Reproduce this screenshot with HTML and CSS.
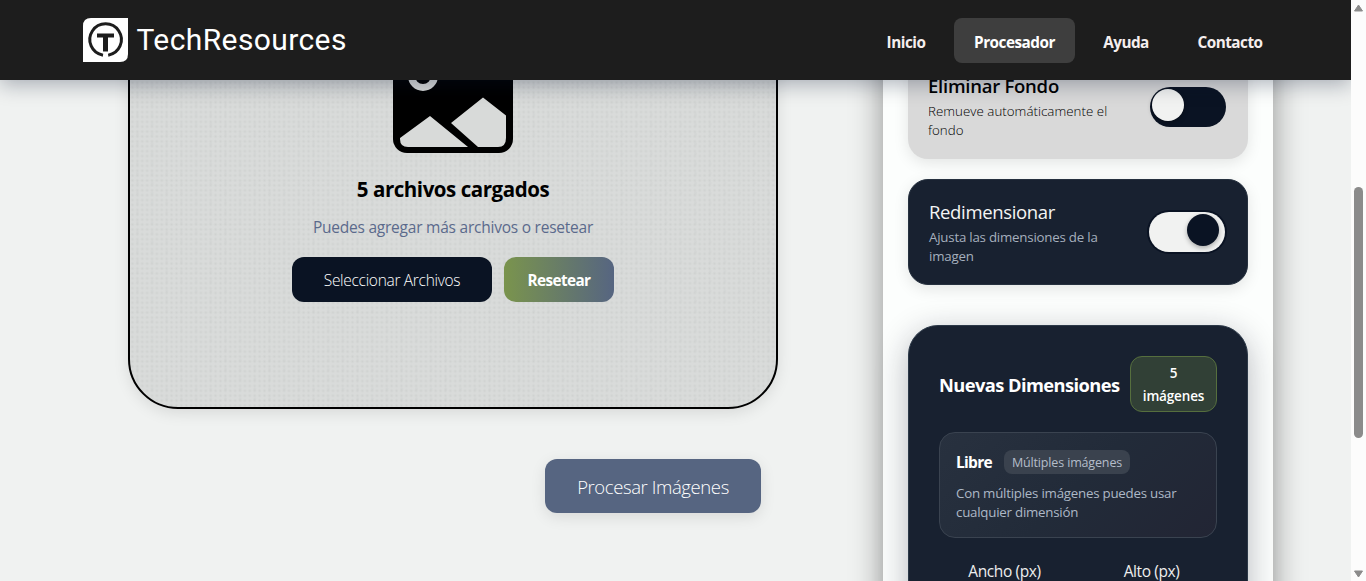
FILE: index.html
```html
<!DOCTYPE html>
<html lang="es">
<head>
<meta charset="utf-8">
<title>TechResources - Procesador</title>
<link rel="stylesheet" href="styles.css">
</head>
<body>
<div class="viewport">
  <div class="page">
    <header class="topbar">
      <a class="brand">
        <svg class="logo" width="46" height="44" viewBox="0 0 46 44">
          <path d="M8 0H45V36Q45 44 37 44H0V8Q0 0 8 0Z" fill="#fff"/>
          <path d="M20 37.200A15.800 15.800 0 1 1 25.200 37.200" fill="none" stroke="#1d1d1d" stroke-width="3"/>
          <path d="M14 15.500H31V19.500H25V33.500H20V19.500H14Z" fill="#1d1d1d"/>
        </svg>
        <span class="brand-name">TechResources</span>
      </a>
      <nav class="nav">
        <a class="nav-link nav-home">Inicio</a>
        <a class="nav-link nav-processor active">Procesador</a>
        <a class="nav-link nav-help">Ayuda</a>
        <a class="nav-link nav-contact">Contacto</a>
      </nav>
    </header>
    <main class="content">
      <section class="work">
        <div class="dropzone">
          <svg class="picture" width="120" height="120" viewBox="0 0 120 120">
            <rect width="120" height="120" rx="14" fill="#000"/>
            <circle cx="30" cy="43" r="11.500" fill="none" stroke="#d8dad9" stroke-width="7"/>
            <path d="M7 105L37 83L75 114H15Q7 114 7 106ZM58 90L90 64.500L113 82.500V105Q113 114 105 114H85Z" fill="#d8dad9"/>
          </svg>
          <h2 class="drop-title">5 archivos cargados</h2>
          <p class="drop-text">Puedes agregar más archivos o resetear</p>
          <div class="drop-actions">
            <button class="btn btn-select">Seleccionar Archivos</button>
            <button class="btn btn-reset">Resetear</button>
          </div>
        </div>
        <button class="btn btn-process">Procesar Imágenes</button>
      </section>
      <aside class="panel">
        <div class="option">
          <div class="option-copy">
            <h3 class="option-title">Eliminar Fondo</h3>
            <p class="option-text">Remueve automáticamente el<br>fondo</p>
          </div>
          <span class="toggle"><span class="knob"></span></span>
        </div>
        <div class="option option-on">
          <div class="option-copy">
            <h3 class="option-title">Redimensionar</h3>
            <p class="option-text">Ajusta las dimensiones de la<br>imagen</p>
          </div>
          <span class="toggle toggle-on"><span class="knob"></span></span>
        </div>
        <div class="dimensions">
          <div class="dim-head">
            <h3 class="dim-title">Nuevas Dimensiones</h3>
            <span class="dim-count">5<br>imágenes</span>
          </div>
          <div class="ratio">
            <div class="ratio-head">
              <strong class="ratio-name">Libre</strong>
              <span class="ratio-tag">Múltiples imágenes</span>
            </div>
            <p class="ratio-text">Con múltiples imágenes puedes usar<br>cualquier dimensión</p>
          </div>
          <div class="fields">
            <label class="field">Ancho (px)</label>
            <label class="field">Alto (px)</label>
          </div>
        </div>
      </aside>
    </main>
  </div>
  <div class="scrollbar">
    <svg width="9" height="8" viewBox="0 0 9 8"><path d="M4.500 1L8.500 7H.5Z" fill="#8b8b8b" stroke="#8b8b8b" stroke-linejoin="round"/></svg>
    <span class="thumb"></span>
    <svg class="arrow-down" width="9" height="8" viewBox="0 0 9 8"><path d="M4.500 7L.5 1H8.500Z" fill="#8b8b8b" stroke="#8b8b8b" stroke-linejoin="round"/></svg>
  </div>
</div>
</body>
</html>
```
FILE: styles.css
```css
* { box-sizing: border-box; }
body {
  margin: 0;
  overflow: hidden;
  font-family: "Open Sans", "Noto Sans", sans-serif;
  background: #f0f2f1;
}
h2, h3, p { margin: 0; white-space: nowrap; }
.viewport { display: flex; height: 581px; overflow: hidden; }
.page { flex: 1; min-width: 0; height: 581px; overflow: hidden; }

.topbar {
  position: relative;
  z-index: 2;
  display: flex;
  justify-content: space-between;
  height: 80px;
  padding: 18px 68px 0 83px;
  background: #1d1d1d;
  box-shadow: 0 4px 20px rgba(10, 20, 50, .33);
}
.brand { display: flex; gap: 8px; height: 44px; }
.brand-name { margin-left: -.5px; font: 400 30px/44px Roboto, sans-serif; color: #fff; letter-spacing: .4px; }
.nav { display: flex; gap: 8px; }
.nav-link {
  height: 45px;
  border-radius: 8px;
  font-size: 15.300px;
  font-weight: 700;
  line-height: 48px;
  letter-spacing: -.5px;
  text-align: center;
  color: #f5eeee;
}
.nav-home { width: 80px; }
.nav-processor { width: 121px; }
.nav-help { width: 86px; }
.nav-contact { width: 106px; }
.nav-link.active { background: #3e3e3e; color: #fff; }

.content { display: flex; height: 501px; padding-left: 128px; gap: 105px; }
.work { width: 650px; display: flex; flex-direction: column; margin-top: -80px; }
.dropzone {
  display: flex;
  flex-direction: column;
  align-items: center;
  height: 409px;
  padding-top: 31px;
  border: 2px solid #000;
  border-radius: 0 0 50px 50px;
  background-color: #d9dbda;
  background-image:
    radial-gradient(circle at 50% 50%, rgba(90, 96, 94, .08) 0, rgba(90, 96, 94, 0) 2.200px),
    radial-gradient(circle at 50% 50%, rgba(90, 96, 94, .06) 0, rgba(90, 96, 94, 0) 2px);
  background-size: 4.900px 4.900px, 14.700px 9.800px;
  box-shadow: 0 4px 15px rgba(0, 0, 0, .1);
}
.picture { display: block; flex: none; }
.drop-title { margin-top: 20px; font-size: 20.500px; line-height: 32px; letter-spacing: -.45px; color: #000; }
.drop-text { margin-top: 9px; font-size: 15.500px; line-height: 26px; letter-spacing: -.23px; color: #5b6a8c; }
.drop-actions { display: flex; gap: 12px; margin-top: 17px; }
.btn { border: 0; padding: 0; font-family: inherit; color: #fff; white-space: nowrap; }
.btn-select { width: 200px; height: 45px; padding-top: 1px; border-radius: 12px; background: #0a1323; font-size: 15.500px; font-weight: 350; letter-spacing: -.3px; }
.btn-reset { width: 110px; height: 45px; padding-top: 1px; border-radius: 12px; background: linear-gradient(90deg, #7a944d, #566581); font-size: 15.300px; font-weight: 700; letter-spacing: -.6px; }
.btn-process {
  align-self: flex-end;
  width: 216px;
  height: 54px;
  margin: 50px 17px 0 0;
  border-radius: 12px;
  background: #566581;
  font-size: 18.500px;
  font-weight: 350;
  letter-spacing: -.4px;
  box-shadow: 0 4px 15px rgba(0, 0, 0, .1);
}

.panel {
  width: 390px;
  height: 640px;
  margin-top: -52px;
  padding: 25px;
  background: #fcfefd;
  box-shadow: 0 0 30px rgba(0, 0, 0, .4);
}
.option {
  display: flex;
  align-items: center;
  justify-content: space-between;
  height: 106px;
  padding: 0 20px;
  border-radius: 20px;
  background: #d9d9d9;
  color: #000;
  box-shadow: 0 4px 15px rgba(0, 0, 0, .1);
}
.option-copy { padding-top: 1px; }
.option-title { margin-top: -1px; font-size: 18.500px; font-weight: 600; line-height: 27px; letter-spacing: -.25px; }
.option-text { margin-top: 3px; font-size: 13.300px; font-weight: 300; line-height: 19px; letter-spacing: .04px; }
.option-on { margin-top: 20px; border: 1px solid #26313f; background: #182130; color: #f5f5f5; }
.option-on .option-title { font-weight: 400; letter-spacing: -.35px; }
.option-on .option-text { font-weight: 400; letter-spacing: -.22px; color: #a5afbd; }
.toggle { width: 76px; height: 40px; margin: 2px 2px 0 0; padding: 2px; border-radius: 20px; background: #0a1323; }
.knob { display: block; width: 32px; height: 32px; border-radius: 50%; background: #f1f2f1; box-shadow: 0 2px 5px rgba(0, 0, 0, .3); }
.toggle-on { padding-left: 38px; margin-top: 0; background: #f1f2f1; box-shadow: 0 0 0 2px #0a1323; }
.toggle-on .knob { background: #0a1323; }

.dimensions {
  height: 340px;
  margin-top: 40px;
  padding: 30px;
  border: 1px solid #2c3948;
  border-radius: 30px;
  background: #182130;
  color: #fff;
  box-shadow: 0 8px 32px rgba(20, 20, 40, .3);
}
.dim-head { display: flex; align-items: center; justify-content: space-between; height: 56px; }
.dim-title { font-size: 18.300px; font-weight: 700; letter-spacing: -.57px; }
.dim-count {
  width: 87px;
  height: 56px;
  padding-top: 5px;
  border: 1px solid #566f3e;
  border-radius: 12px;
  background: #314036;
  font-size: 13.500px;
  font-weight: 550;
  line-height: 23px;
  letter-spacing: -.15px;
  text-align: center;
}
.ratio {
  height: 106px;
  margin-top: 20px;
  padding: 17px 16px;
  border: 1px solid #3a4350;
  border-radius: 16px;
  background: linear-gradient(135deg, #28313f, #222b39 50%, #222534);
}
.ratio-head { display: flex; gap: 12px; height: 24px; align-items: center; }
.ratio-name { width: 36px; font-size: 15.500px; font-weight: 700; letter-spacing: -.7px; }
.ratio-tag { width: 126px; height: 24px; border-radius: 8px; background: #3a424e; color: #b4bdca; font-size: 12.500px; line-height: 25px; letter-spacing: -.15px; text-align: center; }
.ratio-text { margin-top: 10px; font-size: 13.300px; line-height: 19px; letter-spacing: -.23px; color: #adb8c6; }
.fields { display: grid; grid-template-columns: 1fr 1fr; gap: 16px; margin-top: 21px; }
.field { font-size: 15.500px; line-height: 24px; letter-spacing: -.4px; text-align: center; color: #eee; }

.scrollbar {
  display: flex;
  flex-direction: column;
  align-items: center;
  width: 15px;
  padding: 4px 0 3px;
  background: #fcfcfc;
}
.scrollbar svg { flex: none; }
.thumb { flex: none; width: 9px; height: 251px; margin-top: 175px; border-radius: 5px; background: #8b8b8b; }
.arrow-down { margin-top: auto; }
```
